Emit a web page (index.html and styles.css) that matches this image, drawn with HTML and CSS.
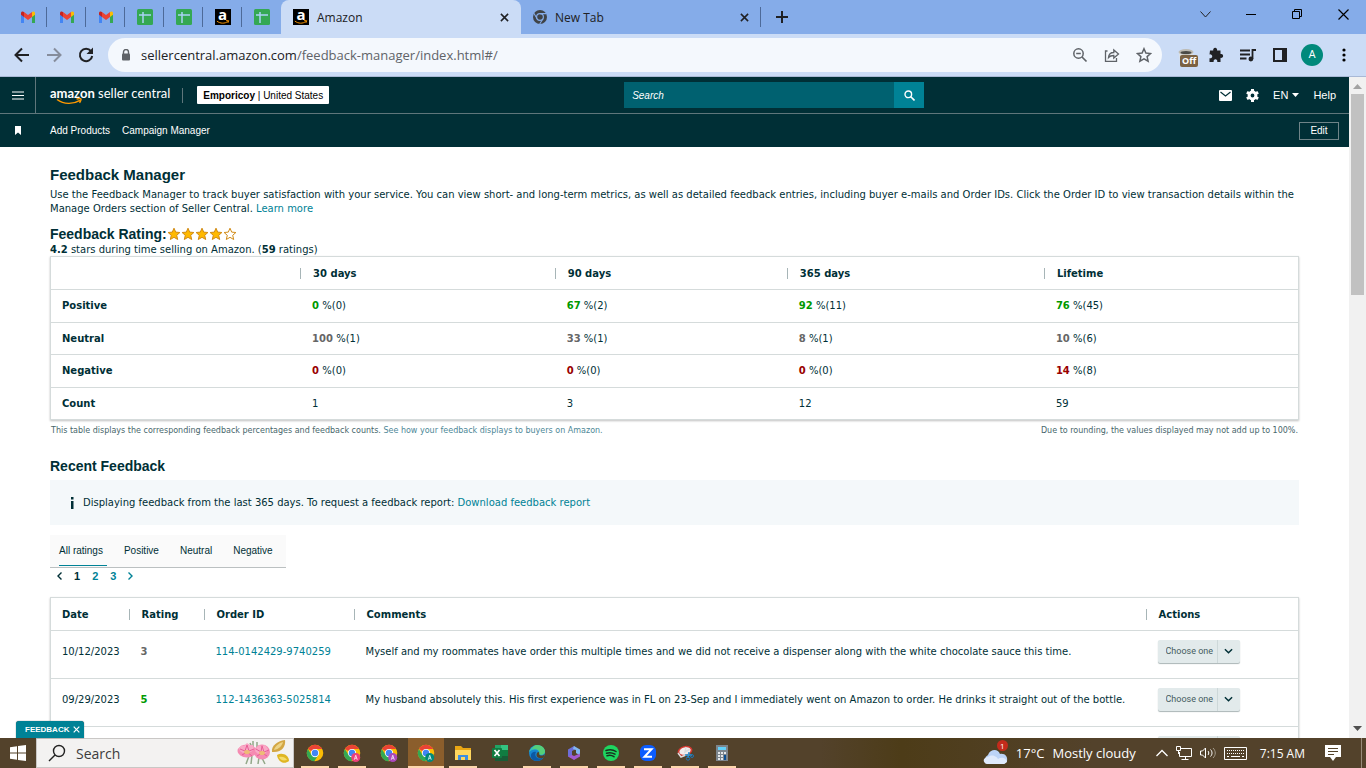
FILE: index.html
```html
<!DOCTYPE html>
<html lang="en">
<head>
  <meta charset="UTF-8">
  <title>Feedback Manager</title>
  <link rel="stylesheet" href="styles.css">
</head>
<body>
  <svg class="symbols" aria-hidden="true">
    <symbol id="gmail" viewBox="0 0 16 12">
      <path d="M1 12h3V5L1 3z" fill="#4285f4"/>
      <path d="M12 12h3V3l-3 2z" fill="#34a853"/>
      <path d="M12 1v5l3-2.300V2c0-1.600-1.800-2-3-1z" fill="#fbbc04"/>
      <path d="M4 6V1l4 3 4-3v5L8 9z" fill="#ea4335"/>
      <path d="M1 2v1.700L4 6V1C2.800 0 1 .400 1 2z" fill="#c5221f"/>
    </symbol>
    <symbol id="sheet" viewBox="0 0 16 16">
      <rect width="16" height="16" rx="1.500" fill="#34a853"/>
      <path d="M2 6h12M6 3v11" stroke="#a9d2f5" stroke-width="1.500" fill="none"/>
    </symbol>
    <symbol id="smile" viewBox="0 0 16 4">
      <path d="M1 1c4 3 9 3 12.500.500M11.500.500l3 0-.900 2.500" fill="none" stroke="#f90" stroke-width="1.100"/>
    </symbol>
    <symbol id="chrome" viewBox="0 0 24 24">
      <circle cx="12" cy="12" r="11" fill="#fbbc04"/>
      <path d="M12 12 2.500 6.500A11 11 0 0 1 21.500 6.500H12z" fill="#ea4335"/>
      <path d="M2.500 6.500A11 11 0 0 0 11 23l5.500-8.500L12 12l-5 2z" fill="#34a853"/>
      <circle cx="12" cy="12" r="5.500" fill="#fff"/>
      <circle cx="12" cy="12" r="4.300" fill="#4285f4"/>
    </symbol>
    <symbol id="cross" viewBox="0 0 10 10">
      <path d="M1 1l8 8M9 1L1 9" stroke="currentColor" stroke-width="1.700" fill="none"/>
    </symbol>
    <symbol id="chevron" viewBox="0 0 10 6">
      <path d="M1 1l4 4 4-4" stroke="currentColor" stroke-width="1.600" fill="none"/>
    </symbol>
    <symbol id="star" viewBox="0 0 14 14">
      <path d="M7 1.200l1.700 3.900 4.200.4-3.200 2.800 1 4.200L7 10.300l-3.700 2.200 1-4.200L1.100 5.500l4.200-.4z" stroke="#d18b16" stroke-width="1"/>
    </symbol>
  </svg>

  <div class="tab-strip">
    <div class="pinned-tabs">
      <a href="#" class="pinned" aria-label="Gmail"><svg width="16" height="12"><use href="#gmail"/></svg></a>
      <a href="#" class="pinned" aria-label="Gmail"><svg width="16" height="12"><use href="#gmail"/></svg></a>
      <a href="#" class="pinned" aria-label="Gmail"><svg width="16" height="12"><use href="#gmail"/></svg></a>
      <a href="#" class="pinned" aria-label="Sheets"><svg width="16" height="16"><use href="#sheet"/></svg></a>
      <a href="#" class="pinned" aria-label="Sheets"><svg width="16" height="16"><use href="#sheet"/></svg></a>
      <a href="#" class="pinned" aria-label="Amazon"><span class="favicon">a<svg width="14" height="4"><use href="#smile"/></svg></span></a>
      <a href="#" class="pinned" aria-label="Sheets"><svg width="16" height="16"><use href="#sheet"/></svg></a>
    </div>
    <div class="tab tab-active">
      <span class="favicon">a<svg width="14" height="4"><use href="#smile"/></svg></span>
      <span class="tab-title">Amazon</span>
      <button class="plain" aria-label="Close tab"><svg width="9" height="9"><use href="#cross"/></svg></button>
    </div>
    <div class="tab tab-last">
      <svg width="14" height="14" viewBox="0 0 24 24"><circle cx="12" cy="12" r="12" fill="#3f4347"/><circle cx="12" cy="12" r="5.800" fill="none" stroke="#85ace9" stroke-width="2"/><path d="M12 6.200h11M7 15L1.500 5.500M17 15l-5.500 9" stroke="#85ace9" stroke-width="1.800"/></svg>
      <span class="tab-title">New Tab</span>
      <button class="plain" aria-label="Close tab"><svg width="9" height="9"><use href="#cross"/></svg></button>
    </div>
    <button class="plain new-tab" aria-label="New tab"><svg width="12" height="12" viewBox="0 0 12 12"><path d="M6 0v12M0 6h12" stroke="#202124" stroke-width="2"/></svg></button>
    <div class="window-buttons">
      <button class="plain" aria-label="Tab search"><svg width="11" height="7" viewBox="0 0 11 7"><path d="M.5.500l5 5.500 5-5.500" stroke="#222" fill="none"/></svg></button>
      <button class="plain" aria-label="Minimize"><svg width="10" height="10" viewBox="0 0 10 10"><path d="M0 5.500h10" stroke="#000"/></svg></button>
      <button class="plain" aria-label="Restore"><svg width="11" height="11" viewBox="0 0 11 11"><path d="M.5 2.500h7v7h-7zM2.500 2V.500h7v7H8" stroke="#000" fill="none"/></svg></button>
      <button class="plain" aria-label="Close"><svg width="11" height="11" viewBox="0 0 11 11"><path d="M.5.500l10 10M10.500.500l-10 10" stroke="#000" stroke-width="1.200"/></svg></button>
    </div>
  </div>

  <div class="toolbar">
    <button class="plain tool" aria-label="Back"><svg width="16" height="16" viewBox="0 0 16 16"><path d="M15 8H2M8 1.500L1.500 8 8 14.500" stroke="#202124" stroke-width="2" fill="none"/></svg></button>
    <button class="plain tool" aria-label="Forward"><svg width="16" height="16" viewBox="0 0 16 16"><path d="M1 8h13M8 1.500L14.500 8 8 14.500" stroke="#868d9c" stroke-width="2" fill="none"/></svg></button>
    <button class="plain tool" aria-label="Reload"><svg width="16" height="16" viewBox="0 0 16 16"><path d="M13 4.200A6.200 6.200 0 1 0 14.200 9" stroke="#202124" stroke-width="2" fill="none"/><path d="M15 .500V7H8.500z" fill="#202124"/></svg></button>
    <div class="address-bar">
      <svg width="10" height="12" viewBox="0 0 10 12"><path d="M2.500 5V3a2.500 2.500 0 0 1 5 0v2" stroke="#5f6368" stroke-width="1.400" fill="none"/><rect x="1" y="4.500" width="8" height="7" rx="1" fill="#5f6368"/></svg>
      <span class="url"><b>sellercentral.amazon.com</b>/feedback-manager/index.html#/</span>
      <svg width="16" height="16" viewBox="0 0 16 16"><circle cx="6.500" cy="6.500" r="4.700" stroke="#5f6368" stroke-width="1.500" fill="none"/><path d="M4.200 6.500h4.600M10 10l4.500 4.500" stroke="#5f6368" stroke-width="1.700"/></svg>
      <svg width="16" height="16" viewBox="0 0 16 16"><path d="M3.500 4H1.500v10.300h11V11M4.500 10.500c.3-3.500 2.500-5 5.300-5V3l4.700 4-4.700 4V8.500c-2.500 0-4 .500-5.300 2z" stroke="#5f6368" stroke-width="1.300" fill="none"/></svg>
      <svg width="16" height="16" viewBox="0 0 16 16"><path d="M8 1.700l1.900 4.300 4.700.5-3.500 3.100 1 4.600L8 11.800l-4.100 2.400 1-4.600L1.400 6.500l4.700-.5z" stroke="#5f6368" stroke-width="1.500" fill="none"/></svg>
    </div>
    <div class="extensions">
      <button class="plain extension" aria-label="Extension off">
        <svg width="16" height="16" viewBox="0 0 16 16"><path d="M1 5l1 10h11l2-10z" fill="#e2e2e0"/><ellipse cx="8" cy="5" rx="7.500" ry="3" fill="#bdbab2"/><ellipse cx="8" cy="5.500" rx="5.500" ry="1.600" fill="#4a4a46"/></svg>
        <span class="extension-badge">Off</span>
      </button>
      <button class="plain" aria-label="Extensions"><svg width="16" height="16" viewBox="0 0 16 16"><path d="M2 3.500h3.300a2 2 0 1 1 3.700 0h3.500V7a2 2 0 1 1 0 3.800V15H9.200a1.900 1.900 0 1 0-3.500 0H1.500v-3.800a2 2 0 1 0 0-3.700z" fill="#202124"/></svg></button>
      <button class="plain" aria-label="Media"><svg width="16" height="14" viewBox="0 0 16 14"><path d="M0 2.500h10M0 6.500h10M0 10.500h6.500M12.500 11V2H16" stroke="#202124" stroke-width="1.800" fill="none"/><circle cx="10.900" cy="11" r="2.400" fill="#202124"/></svg></button>
      <button class="plain" aria-label="Side panel"><svg width="14" height="14" viewBox="0 0 14 14"><path d="M1 1h12v12H1z" stroke="#202124" stroke-width="2" fill="none"/><path d="M9 1h4v12H9z" fill="#202124"/></svg></button>
      <button class="plain" aria-label="Profile"><span class="avatar">A</span></button>
      <button class="plain" aria-label="Menu"><svg width="4" height="14" viewBox="0 0 4 14"><circle cx="2" cy="2" r="1.600"/><circle cx="2" cy="7" r="1.600"/><circle cx="2" cy="12" r="1.600"/></svg></button>
    </div>
  </div>

  <div class="viewport">
    <div class="page">
      <header class="header">
        <div class="header-left">
          <button class="menu-button" aria-label="Menu"><svg width="12" height="9" viewBox="0 0 12 9"><path d="M0 1h12M0 4.500h12M0 8h12" stroke="#fff" stroke-width="1.200"/></svg></button>
          <a href="#" class="logo"><span><b>amazon</b> seller central</span><svg width="28" height="7" viewBox="0 0 28 7"><path d="M1 1.500c7 5 16 5 23 .800M20.500 1.200c3-1 5-.8 4.500.500s-.6 2-1.500 3" fill="none" stroke="#f90" stroke-width="1.400"/></svg></a>
          <span class="logo-divider"></span>
          <button class="account"><b>Emporicoy</b> | United States</button>
        </div>
        <form class="search">
          <input type="text" placeholder="Search" aria-label="Search">
          <button type="button" aria-label="Search"><svg width="11" height="11" viewBox="0 0 11 11"><circle cx="4.300" cy="4.300" r="3.300" stroke="#fff" stroke-width="1.400" fill="none"/><path d="M6.800 6.800L10.500 10.500" stroke="#fff" stroke-width="1.600"/></svg></button>
        </form>
        <nav class="header-right">
          <a href="#" aria-label="Messages"><svg width="13" height="11" viewBox="0 0 13 11"><rect width="13" height="11" rx="1" fill="#fff"/><path d="M1.500 2l5 4 5-4" stroke="#002f36" stroke-width="1.200" fill="none"/></svg></a>
          <a href="#" aria-label="Settings"><svg width="13" height="13" viewBox="0 0 13 13"><circle cx="6.500" cy="6.500" r="3.400" fill="none" stroke="#fff" stroke-width="3"/><path d="M6.500 0v3M6.500 10v3M.9 3.200l2.600 1.500M9.500 8.300l2.600 1.500M.9 9.800l2.600-1.500M9.500 4.700l2.600-1.500" stroke="#fff" stroke-width="3"/></svg></a>
          <a href="#" class="language">EN <svg width="7" height="4" viewBox="0 0 7 4"><path d="M0 0h7L3.500 4z" fill="#fff"/></svg></a>
          <a href="#">Help</a>
        </nav>
      </header>
      <nav class="bookmarks">
        <svg width="6" height="9" viewBox="0 0 6 9"><path d="M0 0h6v9L3 6.500 0 9z" fill="#fff"/></svg>
        <a href="#">Add Products</a>
        <a href="#">Campaign Manager</a>
        <button class="edit">Edit</button>
      </nav>

      <main class="content">
        <h1>Feedback Manager</h1>
        <p class="intro">Use the Feedback Manager to track buyer satisfaction with your service. You can view short- and long-term metrics, as well as detailed feedback entries, including buyer e-mails and Order IDs. Click the Order ID to view transaction details within the Manage Orders section of Seller Central. <a href="#">Learn more</a></p>

        <h2 class="rating-title">Feedback Rating:
          <span class="stars">
            <svg width="14" height="14" fill="#ffb900"><use href="#star"/></svg>
            <svg width="14" height="14" fill="#ffb900"><use href="#star"/></svg>
            <svg width="14" height="14" fill="#ffb900"><use href="#star"/></svg>
            <svg width="14" height="14" fill="#ffb900"><use href="#star"/></svg>
            <svg width="14" height="14" fill="#fff"><use href="#star"/></svg>
          </span>
        </h2>
        <p class="rating-text"><b>4.2</b> stars during time selling on Amazon. (<b>59</b> ratings)</p>

        <table class="summary">
          <colgroup><col class="s-label"><col class="s-30"><col class="s-90"><col class="s-365"><col></colgroup>
          <thead>
            <tr><td></td><th><span>30 days</span></th><th><span>90 days</span></th><th><span>365 days</span></th><th><span>Lifetime</span></th></tr>
          </thead>
          <tbody>
            <tr class="positive"><th>Positive</th><td><b>0</b> %(0)</td><td><b>67</b> %(2)</td><td><b>92</b> %(11)</td><td><b>76</b> %(45)</td></tr>
            <tr class="neutral"><th>Neutral</th><td><b>100</b> %(1)</td><td><b>33</b> %(1)</td><td><b>8</b> %(1)</td><td><b>10</b> %(6)</td></tr>
            <tr class="negative"><th>Negative</th><td><b>0</b> %(0)</td><td><b>0</b> %(0)</td><td><b>0</b> %(0)</td><td><b>14</b> %(8)</td></tr>
            <tr><th>Count</th><td>1</td><td>3</td><td>12</td><td>59</td></tr>
          </tbody>
        </table>
        <div class="notes">
          <span>This table displays the corresponding feedback percentages and feedback counts. <a href="#">See how your feedback displays to buyers on Amazon.</a></span>
          <span>Due to rounding, the values displayed may not add up to 100%.</span>
        </div>

        <h2>Recent Feedback</h2>
        <div class="alert">
          <svg width="4" height="12" viewBox="0 0 4 12"><path d="M1 0h2.500v2.500H1zM1 4h2.500v8H1z" fill="#002f36"/></svg>
          <span>Displaying feedback from the last 365 days. To request a feedback report: <a href="#">Download feedback report</a></span>
        </div>

        <div class="filters">
          <button class="selected">All ratings</button>
          <button>Positive</button>
          <button>Neutral</button>
          <button>Negative</button>
        </div>
        <nav class="pager">
          <a href="#" class="current" aria-label="Previous"><svg width="5" height="8" viewBox="0 0 5 8"><path d="M4.500.500L1 4l3.500 3.500" stroke="currentColor" stroke-width="1.400" fill="none"/></svg></a>
          <a href="#" class="current">1</a>
          <a href="#">2</a>
          <a href="#">3</a>
          <a href="#" aria-label="Next"><svg width="5" height="8" viewBox="0 0 5 8"><path d="M.5.500L4 4 .5 7.500" stroke="currentColor" stroke-width="1.400" fill="none"/></svg></a>
        </nav>

        <table class="feedback-list">
          <colgroup><col class="f-date"><col class="f-rating"><col class="f-order"><col><col class="f-actions"></colgroup>
          <thead>
            <tr><th>Date</th><th><span>Rating</span></th><th><span>Order ID</span></th><th><span>Comments</span></th><th><span>Actions</span></th></tr>
          </thead>
          <tbody>
            <tr class="neutral">
              <td>10/12/2023</td><td><b>3</b></td><td><a href="#">114-0142429-9740259</a></td>
              <td>Myself and my roommates have order this multiple times and we did not receive a dispenser along with the white chocolate sauce this time.</td>
              <td><span class="action"><select aria-label="Action"><option>Choose one</option></select><svg width="9" height="6"><use href="#chevron"/></svg></span></td>
            </tr>
            <tr class="positive">
              <td>09/29/2023</td><td><b>5</b></td><td><a href="#">112-1436363-5025814</a></td>
              <td>My husband absolutely this. His first experience was in FL on 23-Sep and I immediately went on Amazon to order. He drinks it straight out of the bottle.</td>
              <td><span class="action"><select aria-label="Action"><option>Choose one</option></select><svg width="9" height="6"><use href="#chevron"/></svg></span></td>
            </tr>
            <tr>
              <td></td><td></td><td></td><td></td>
              <td><span class="action"><select aria-label="Action"><option>Choose one</option></select><svg width="9" height="6"><use href="#chevron"/></svg></span></td>
            </tr>
          </tbody>
        </table>
      </main>
    </div>
    <div class="scrollbar">
      <svg width="9" height="5" viewBox="0 0 9 5"><path d="M4.500 0L9 5H0z" fill="#a3a3a3"/></svg>
      <div class="scroll-track"><div class="scroll-thumb"></div></div>
      <svg width="9" height="5" viewBox="0 0 9 5"><path d="M4.500 5L9 0H0z" fill="#505050"/></svg>
    </div>
    <button class="feedback-button">FEEDBACK <svg width="7" height="7"><use href="#cross"/></svg></button>
  </div>

  <div class="taskbar">
    <button class="plain start" aria-label="Start"><svg width="16" height="16" viewBox="0 0 16 16"><path d="M0 2.300L7 1.300V7.500H0zM8 1.100L16 0V7.500H8zM0 8.500h7v6.200l-7-1zM8 8.500h8V16l-8-1.100z" fill="#fff"/></svg></button>
    <label class="task-search">
      <svg width="18" height="18" viewBox="0 0 18 18"><circle cx="11" cy="7" r="5.500" stroke="#222" stroke-width="1.400" fill="none"/><path d="M7 11L1 17" stroke="#222" stroke-width="1.500"/></svg>
      <input type="text" placeholder="Search" aria-label="Search Windows">
      <svg width="54" height="26" viewBox="0 0 54 26">
        <path d="M12 16l-3 8M15 15l-1 9M24 16l4 8M22 17l-1 7M16 1v9M20 2v8M13 3l3 6" stroke="#93a889" stroke-width="1.500"/>
        <ellipse cx="10" cy="11" rx="9.500" ry="6.500" fill="#f58bb2"/>
        <ellipse cx="25" cy="12" rx="8" ry="7.500" fill="#f58bb2"/>
        <path d="M2 8l3-3 2 1 3-3 3 2 3 0 1 4-3 3-4-1-4 2-3-2zM19 8l3-3 3 1 3-1 3 4-2 4-4-1-4 2-3-3z" fill="#f9a9c6"/>
        <path d="M3 9l5 2 2-6 2 6 5-2M5 15l5-3 5 4M19 9l5 3 1-6 2 6 5-2M20 16l5-3 5 3" stroke="#e75e97" stroke-width="1" fill="none"/>
        <ellipse cx="10" cy="12" rx="3" ry="2" fill="#eebb77"/><ellipse cx="25" cy="13" rx="3" ry="2" fill="#eebb77"/>
        <path d="M35 12C34 6 40 1 48 0c1 6-3 13-13 12z" fill="#d3a643"/><path d="M37 10c1-4 5-7 9-8-1 4-4 7-9 8z" fill="#edd487"/>
        <path d="M40 15c5-3 12 0 12 6-5 4-11 1-12-6z" fill="#dfb623"/><path d="M42 17c4-1 7 1 8 3-4 1-7 0-8-3z" fill="#f4dc6a"/>
      </svg>
    </label>
    <div class="apps">
      <button class="app running" aria-label="Chrome"><svg width="18" height="18" viewBox="0 0 24 24"><use href="#chrome"/></svg></button>
      <button class="app running" aria-label="Chrome profile"><svg width="18" height="18" viewBox="0 0 24 24"><use href="#chrome"/><circle cx="17" cy="18" r="6" fill="#ec407a"/><path d="M15 21l2-6 2 6M16 19h2" stroke="#fff" fill="none"/></svg></button>
      <button class="app" aria-label="Chrome profile"><svg width="18" height="18" viewBox="0 0 24 24"><use href="#chrome"/><circle cx="17" cy="18" r="6" fill="#ab47bc"/><path d="M15 21l2-6 2 6M16 19h2" stroke="#fff" fill="none"/></svg></button>
      <button class="app running active" aria-label="Chrome profile"><svg width="18" height="18" viewBox="0 0 24 24"><use href="#chrome"/><circle cx="17" cy="18" r="6" fill="#00897b"/><path d="M15 21l2-6 2 6M16 19h2" stroke="#fff" fill="none"/></svg></button>
      <button class="app running" aria-label="Files"><svg width="18" height="16" viewBox="0 0 18 16"><path d="M1 1h6l2 2h8v12H1z" fill="#e9a614"/><path d="M1 5h16v10H1z" fill="#ffd75e"/><path d="M4 15v-5h10v5h-3v-3H7v3z" fill="#3d8ee0"/></svg></button>
      <button class="app" aria-label="Excel"><svg width="18" height="16" viewBox="0 0 18 16"><path d="M4 0h13v16H4z" fill="#21a366"/><path d="M10 0h7v5h-7z" fill="#33c481"/><path d="M4 10h13v6H4z" fill="#185c37"/><path d="M10 5h7v6h-7z" fill="#107c41"/><rect x="1" y="3" width="10" height="10" rx="1" fill="#107c41"/><path d="M3.500 5l5 6M8.500 5l-5 6" stroke="#fff" stroke-width="1.700"/></svg></button>
      <button class="app running" aria-label="Edge"><svg width="16" height="16" viewBox="0 0 16 16"><circle cx="8" cy="8" r="8" fill="#1686d0"/><path d="M0 7C2-1 14-2 16 6c0 4-4 5-6 3 2-4-5-7-10-2z" fill="#35c1b4"/><path d="M8 0c6 0 8 4 8 7-1 3-4 3-6 2 2-4-3-6-7-5 1-2 2-4 5-4z" fill="#55cf79"/><path d="M7 7c-2 3 0 8 7 6-4 5-13 3-12-3 0-2 3-4 5-3z" fill="#0c59a4"/><path d="M10 9c1 2 4 2 5.500 0v3c-2 2-8 2-8-2 0-2 1-3 2-3 1 1 1 1 .5 2z" fill="#54432a"/></svg></button>
      <button class="app running" aria-label="Office"><svg width="16" height="16" viewBox="0 0 16 16"><path d="M8 1L2 4.500v7L6 13V6l4-2z" fill="#6c6ed8"/><path d="M8 1l6 3.500v6L10 8V5L7 4z" fill="#80b7f1"/><path d="M2 11.500L8 15l6-3.500v-3L8 11l-2-1z" fill="#a25ad0"/></svg></button>
      <button class="app running" aria-label="Spotify"><svg width="16" height="16" viewBox="0 0 16 16"><circle cx="8" cy="8" r="8" fill="#1ed760"/><path d="M3 5.500c3-1 7-1 10 1M3.500 8.200c3-1 6-.5 8.500 1M4 10.700c2.500-.7 5-.4 7 1" stroke="#17331f" stroke-width="1.500" stroke-linecap="round" fill="none"/></svg></button>
      <button class="app running" aria-label="Zoom"><svg width="16" height="16" viewBox="0 0 16 16"><rect width="16" height="16" rx="6" fill="#0b5cff"/><path d="M4 4.300h7.500L4.500 11.700H12" stroke="#fff" stroke-width="2" fill="none"/></svg></button>
      <button class="app running" aria-label="Snipping tool"><svg width="17" height="16" viewBox="0 0 17 16"><ellipse cx="8" cy="6" rx="7.500" ry="5" fill="#d63931" transform="rotate(-15 8 6)"/><ellipse cx="8" cy="6" rx="5.800" ry="3.600" fill="#f3eeee" transform="rotate(-15 8 6)"/><path d="M1 8l3 4 5-2M9 2L8 7l5-3" stroke="#ddd" stroke-width="1.500" fill="none"/><path d="M8 10h7M12 7l-1 6" stroke="#2d9bd8" stroke-width="1.500"/><circle cx="11" cy="13.500" r="1.700" stroke="#2375b3" fill="none"/><circle cx="15" cy="11" r="1.500" stroke="#2375b3" fill="none"/></svg></button>
      <button class="app running" aria-label="Calculator"><svg width="12" height="16" viewBox="0 0 12 16"><rect width="12" height="16" fill="#7d858c"/><rect x="2" y="2" width="8" height="3" fill="#63d1fa"/><path d="M2 7h2v2H2zM5 7h2v2H5zM8 7h2v2H8zM2 10h2v2H2zM5 10h2v2H5zM2 13h2v2H2zM5 13h2v2H5z" fill="#e4e7ea"/><path d="M8 10h2v5H8z" fill="#0c4f92"/></svg></button>
    </div>
    <div class="tray">
      <span class="weather">
        <span class="cloud"><svg width="25" height="16" viewBox="0 0 25 16"><path d="M5 16a5 5 0 0 1 0-9C7 1 15 0 17 6c5-1 8 3 7 7-1 2-2 3-4 3z" fill="#bcd3f7"/><path d="M4 16c-5-1-4-7 1-7 5-4 10 1 10 2 4-3 9 0 9 3l-3 2z" fill="#e0eafc"/></svg><span class="cloud-badge">1</span></span>
        <span>17°C</span><span>Mostly cloudy</span>
      </span>
      <svg width="12" height="8" viewBox="0 0 12 8"><path d="M.5 7L6 1.500 11.500 7" stroke="#fff" stroke-width="1.300" fill="none"/></svg>
      <svg width="16" height="14" viewBox="0 0 16 14"><path d="M5 2.500h10.500v8H3.500V6M9.500 10.500v3M5.500 13.500h7M.5.500h4v4h-4zM2.500 4v4" stroke="#fff" fill="none"/></svg>
      <svg width="16" height="14" viewBox="0 0 16 14"><path d="M.5 5h2l3-3v10l-3-3h-2zM8 5c1 1 1 3 0 4M10.500 3.500c2 2 2 5 0 7" stroke="#fff" fill="none"/><path d="M13 2c3 3 3 7 0 10" stroke="#a69d8e" fill="none"/></svg>
      <svg width="23" height="13" viewBox="0 0 23 13"><path d="M.5.500h22v12H.5z" stroke="#fff" fill="none"/><path d="M3 3.500h17M3 6.500h17" stroke="#fff" stroke-dasharray="1 1"/><path d="M3 9.500h2M7 9.500h9M18 9.500h2" stroke="#fff"/></svg>
      <span class="clock">7:15 AM</span>
      <svg width="16" height="16" viewBox="0 0 16 16"><path d="M0 0h16v12h-5l-3 4-3-4H0z" fill="#fff"/><path d="M3 3.500h10M3 6.500h10M3 9.500h6" stroke="#54432a"/></svg>
      <span class="show-desktop"></span>
    </div>
  </div>
</body>
</html>
```
FILE: styles.css
```css
/* General */
* {
  box-sizing: border-box;
}

body {
  margin: 0;
  height: 100vh;
  display: flex;
  flex-direction: column;
  overflow: hidden;
  font-family: "DejaVu Sans", Verdana, sans-serif;
  font-size: 10px;
  color: #002f36;
  background: #fff;
}

svg {
  display: block;
  flex-shrink: 0;
}

.symbols {
  position: absolute;
  width: 0;
  height: 0;
}

a {
  color: #008296;
  text-decoration: none;
}

button,
input,
select {
  font: inherit;
  color: inherit;
  margin: 0;
  padding: 0;
  border: 0;
  border-radius: 0;
  outline: none;
}

.plain {
  background: none;
  display: flex;
  align-items: center;
  justify-content: center;
}

/* Browser tabs */
.tab-strip {
  display: flex;
  height: 34px;
  flex-shrink: 0;
  background: #85ace9;
  font-family: "Open Sans", sans-serif;
  font-size: 12px;
  color: #202124;
}

.pinned-tabs {
  display: flex;
  padding-left: 8px;
}

.pinned {
  width: 39px;
  display: flex;
  align-items: center;
  justify-content: center;
  background: linear-gradient(#4d6a99, #4d6a99) right center / 1px 20px no-repeat;
}

.pinned:last-child {
  background: none;
}

.favicon {
  width: 16px;
  height: 16px;
  flex-shrink: 0;
  display: flex;
  flex-direction: column;
  align-items: center;
  background: #000;
  color: #fff;
  font: bold 15px/11px "Open Sans", sans-serif;
}

.tab {
  width: 240px;
  display: flex;
  align-items: center;
  gap: 8px;
  padding: 0 12px;
}

.tab-active {
  background: #cbdcf6;
  border-radius: 8px 8px 0 0;
}

.tab-last {
  background: linear-gradient(#4d6a99, #4d6a99) right center / 1px 20px no-repeat;
}

.tab-title {
  flex: 1;
}

.new-tab {
  width: 42px;
}

.window-buttons {
  display: flex;
  align-items: center;
  height: 28px;
  margin-left: auto;
}

.window-buttons button {
  width: 46px;
}

/* Browser toolbar */
.toolbar {
  display: flex;
  align-items: center;
  height: 43px;
  flex-shrink: 0;
  padding: 0 6px;
  background: #cbdcf6;
  border-bottom: 1px solid #a9b9d6;
}

.tool {
  width: 32px;
}

.address-bar {
  flex: 1;
  height: 34px;
  margin: 0 10px 0 6px;
  padding: 0 10px 0 13px;
  display: flex;
  align-items: center;
  gap: 16px;
  border-radius: 17px;
  background: #f4f8fd;
}

.url {
  flex: 1;
  margin-left: -6px;
  font-family: "Open Sans", sans-serif;
  font-size: 13px;
  color: #5f6368;
}

.url b {
  font-weight: normal;
  color: #202124;
}

.extensions {
  display: flex;
  align-items: center;
}

.extensions button {
  width: 32px;
}

.extensions .extension {
  width: 28px;
  position: relative;
}

.extension-badge {
  position: absolute;
  left: 8px;
  top: 8px;
  padding: 0 2px;
  border-radius: 2px;
  background: #7b6243;
  color: #fff;
  font: bold 9px/12px "Open Sans", sans-serif;
}

.avatar {
  width: 22px;
  height: 22px;
  border-radius: 50%;
  background: #00897b;
  color: #fff;
  font: 11px/22px Roboto, sans-serif;
  text-align: center;
}

/* Page and scrollbar */
.viewport {
  flex: 1;
  min-height: 0;
  display: flex;
  position: relative;
}

.page {
  flex: 1;
  overflow: hidden;
}

.scrollbar {
  width: 17px;
  padding: 7px 0;
  display: flex;
  flex-direction: column;
  align-items: center;
  gap: 5px;
  background: #f1f1f1;
}

.scroll-track {
  flex: 1;
  width: 13px;
}

.scroll-thumb {
  height: 32%;
  background: #c1c1c1;
}

/* Seller Central header */
.header,
.bookmarks {
  display: flex;
  background: #002f36;
  font-family: "Liberation Sans", Arial, sans-serif;
  font-size: 10px;
  color: #fff;
}

.header {
  height: 37px;
  justify-content: space-between;
  border-bottom: 1px solid #5f767b;
}

.header a,
.bookmarks a {
  color: #fff;
}

.header-left,
.header-right {
  display: flex;
  align-items: center;
}

.menu-button {
  width: 36px;
  height: 36px;
  display: flex;
  align-items: center;
  justify-content: center;
  background: none;
  border-right: 1px solid #5f767b;
}

.logo {
  display: grid;
  margin-left: 14px;
  font: 13px/17px Lato, sans-serif;
}

.logo span,
.logo svg {
  grid-area: 1 / 1;
}

.logo svg {
  margin: 13px 0 0 6px;
}

.logo-divider {
  width: 1px;
  height: 15px;
  margin: 0 14px 0 12px;
  background: #5f767b;
}

.account {
  height: 18px;
  padding: 0 6px;
  border-radius: 1px;
  background: #fff;
  color: #000;
}

.search {
  display: flex;
  width: 300px;
  height: 26px;
  margin: 5px 0;
}

.search input {
  flex: 1;
  min-width: 0;
  padding: 0 8px;
  background: #006170;
  color: #fff;
}

.search input::placeholder {
  color: #fff;
  font-style: italic;
}

.search button {
  width: 30px;
  display: flex;
  align-items: center;
  justify-content: center;
  background: #008296;
}

.header-right {
  gap: 14px;
  padding-right: 13px;
  font-size: 11px;
}

.language {
  display: flex;
  align-items: center;
  gap: 4px;
}

.bookmarks {
  height: 33px;
  align-items: center;
  gap: 12px;
  padding: 0 10px 0 15px;
}

.bookmarks svg {
  margin-right: 17px;
}

.edit {
  margin-left: auto;
  width: 40px;
  height: 18px;
  border: 1px solid #6f8488;
  background: none;
}

/* Content */
.content {
  padding: 18px 50px;
}

h1,
h2 {
  margin: 0;
  font-family: "Liberation Sans", Arial, sans-serif;
}

h1 {
  font-size: 15px;
  line-height: 19px;
}

h2 {
  margin: 19px 0 4px;
  font-size: 14px;
  line-height: 20px;
}

p {
  margin: 0;
}

.intro {
  margin: 4px 0 9px;
  line-height: 14px;
}

.rating-title {
  display: flex;
  align-items: center;
  margin: 0;
  line-height: 18px;
}

.stars {
  display: flex;
}

.rating-text {
  line-height: 13px;
}

/* Tables */
table {
  width: 100%;
  table-layout: fixed;
  border-collapse: collapse;
  border: 1px solid #d5dbdb;
  box-shadow: 0 1px 2px rgba(0, 0, 0, 0.25);
}

tr {
  border-bottom: 1px solid #d5dbdb;
}

th,
td {
  padding: 0 12px;
  text-align: left;
}

th:first-child,
td:first-child {
  padding-left: 11px;
}

thead th {
  height: 33px;
}

thead th span {
  display: block;
  margin-left: -12px;
  padding-left: 12px;
  border-left: 1px solid #a7b5b7;
}

.summary {
  height: 164px;
}

.s-label { width: 20%; }
.s-30 { width: 20.4%; }
.s-90 { width: 18.6%; }
.s-365 { width: 20.6%; }

.positive b { color: #090; }
.neutral b { color: #666; }
.negative b { color: #900; }

.notes {
  display: flex;
  justify-content: space-between;
  margin-top: 5px;
  padding: 0 1px;
  font-size: 8px;
  line-height: 12px;
  color: #47666b;
}

.notes a {
  color: #4d8797;
}

.alert {
  display: flex;
  align-items: center;
  gap: 9px;
  height: 45px;
  padding: 0 20px;
  background: #f4f8fa;
}

/* Rating filter and pages */
.filters {
  display: inline-flex;
  height: 33px;
  margin-top: 10px;
  padding: 0 13px 0 9px;
  gap: 21px;
  background: #fafafa;
  border-bottom: 1px solid #bbc0c1;
  font-family: "Liberation Sans", Arial, sans-serif;
}

.filters button {
  height: 31px;
  background: none;
  border-bottom: 1px solid transparent;
}

.filters .selected {
  margin-right: -4px;
  padding-right: 4px;
  border-color: #008296;
}

.pager {
  display: flex;
  align-items: center;
  gap: 12px;
  height: 16px;
  margin-bottom: 13px;
  padding-left: 7px;
  font: bold 11px/16px "Liberation Sans", Arial, sans-serif;
}

.pager .current {
  color: #002f36;
}

.f-date { width: 78px; }
.f-rating { width: 75px; }
.f-order { width: 150px; }
.f-actions { width: 153px; }

.feedback-list td {
  height: 48px;
  padding-bottom: 7px;
  white-space: nowrap;
}

.feedback-list tbody td:first-child {
  padding-right: 0;
}

.action {
  display: inline-grid;
  align-items: center;
  vertical-align: middle;
}

.action select,
.action svg {
  grid-area: 1 / 1;
}

.action select {
  appearance: none;
  width: 82px;
  height: 23px;
  padding: 0 8px;
  border-radius: 2px;
  background: linear-gradient(#cdd8d9, #cdd8d9) 59px 0 / 1px 100% no-repeat #e2eaeb;
  box-shadow: 0 1px 1px #aab5b6;
  font: 9px Roboto, sans-serif;
  color: #455b60;
}

.action svg {
  justify-self: end;
  margin-right: 7px;
  pointer-events: none;
}

/* Floating feedback tab */
.feedback-button {
  position: absolute;
  left: 16px;
  bottom: 0;
  height: 17px;
  padding: 0 4px 0 9px;
  display: flex;
  align-items: center;
  gap: 4px;
  border-radius: 3px 3px 0 0;
  background: #008296;
  color: #fff;
  font: bold 8px "Liberation Sans", Arial, sans-serif;
  box-shadow: 0 0 1px #333;
}

/* Taskbar */
.taskbar {
  display: flex;
  height: 30px;
  flex-shrink: 0;
  background: linear-gradient(90deg, #53422b 60%, #4d3c18 66%, #53422b 80%);
  font-family: "Open Sans", sans-serif;
  font-size: 14px;
  color: #fff;
}

.start {
  width: 36px;
}

.task-search {
  display: flex;
  align-items: center;
  gap: 10px;
  width: 258px;
  padding: 0 2px 0 11px;
  background: #f3f2f1;
  border: 1px solid #c9c7c5;
}

.task-search input {
  flex: 1;
  min-width: 0;
  background: none;
  color: #222;
}

.task-search input::placeholder {
  color: #3c3c3c;
}

.apps {
  display: flex;
  gap: 1px;
  padding-left: 3px;
}

.app {
  width: 36px;
  display: flex;
  align-items: center;
  justify-content: center;
  background: none;
}

.running {
  background: linear-gradient(#fdd6ac, #fdd6ac) center bottom / 28px 2px no-repeat;
}

.active {
  background: linear-gradient(#fdd6ac, #fdd6ac) center bottom / 100% 2px no-repeat #8b5e2c;
}

.tray {
  display: flex;
  align-items: center;
  gap: 8px;
  margin-left: auto;
  padding-right: 4px;
}

.weather {
  display: flex;
  align-items: center;
  gap: 8px;
  margin-right: 12px;
  font-size: 13px;
}

.cloud {
  position: relative;
  padding-top: 6px;
}

.cloud-badge {
  position: absolute;
  right: 0;
  top: -2px;
  width: 11px;
  height: 11px;
  border-radius: 50%;
  background: #c42b1c;
  font-size: 8px;
  line-height: 11px;
  text-align: center;
}

.clock {
  margin: 0 12px 0 5px;
  font-size: 12px;
}

.show-desktop {
  width: 1px;
  height: 30px;
  margin-left: 12px;
  background: #978b7a;
}
```
